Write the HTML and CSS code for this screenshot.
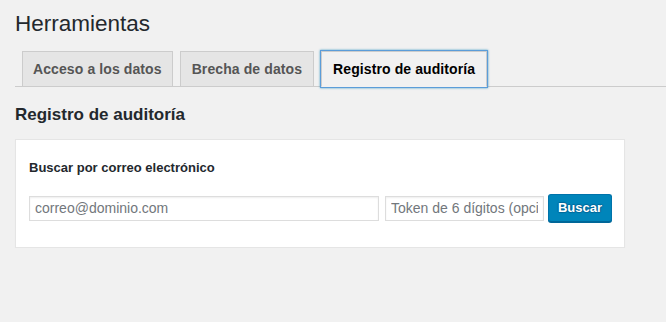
FILE: index.html
```html
<!DOCTYPE html>
<html>
<head>
  <meta charset="utf-8">
  <title>Herramientas</title>
  <link rel="stylesheet" href="styles.css">
</head>
<body>
  <div class="wrap">
    <h1>Herramientas</h1>

    <!-- Tabs -->
    <nav class="nav-tab-wrapper">
      <a class="nav-tab" href="#">Acceso a los datos</a>
      <a class="nav-tab" href="#">Brecha de datos</a>
      <a class="nav-tab nav-tab-active" href="#">Registro de auditoría</a>
    </nav>

    <h2>Registro de auditoría</h2>

    <!-- Search card -->
    <div class="card">
      <label class="card-label" for="email">Buscar por correo electrónico</label>
      <div class="search-row">
        <input id="email" class="email-input" type="text" placeholder="correo@dominio.com">
        <input class="token-input" type="text" placeholder="Token de 6 dígitos (opcional)">
        <button class="button-primary">Buscar</button>
      </div>
    </div>
  </div>
</body>
</html>
```

FILE: styles.css
```css
* {
  box-sizing: border-box;
}

body {
  margin: 0;
  background: #f1f1f1;
  color: #444;
  font-family: "Liberation Sans", Arial, sans-serif;
  font-size: 13px;
}

.wrap {
  margin: 0 0 0 15px;
}

h1 {
  margin: 0;
  padding: 9px 0 4px;
  font-size: 22.5px;
  font-weight: 400;
  line-height: 1.3;
  color: #23282d;
}

/* Tabs */
.nav-tab-wrapper {
  display: flex;
  padding-top: 9px;
  border-bottom: 1px solid #ccc;
}

.nav-tab {
  margin-left: 7px;
  margin-bottom: -1px;
  padding: 5px 11px 5px 11px;
  border: 1px solid #ccc;
  border-bottom: 1px solid #ccc;
  background: #e5e5e5;
  color: #555;
  font-size: 14px;
  font-weight: 700;
  line-height: 24px;
  letter-spacing: 0.1px;
  text-decoration: none;
}

.nav-tab:first-child {
  padding: 5px 10px;
}

.nav-tab-active {
  border-bottom-color: #f1f1f1;
  background: #f1f1f1;
  color: #000;
  box-shadow: 0 0 0 1px #5b9dd9, 0 0 2px 1px rgba(30, 140, 190, 0.8);
}

h2 {
  margin: 17px 0 0;
  font-size: 17px;
  font-weight: 700;
  line-height: 22px;
  color: #23282d;
}

/* Card */
.card {
  width: 610px;
  margin-top: 13px;
  padding: 19px 13px 25px;
  background: #fff;
  border: 1px solid #e5e5e5;
  box-shadow: 0 1px 1px rgba(0, 0, 0, 0.04);
}

.card-label {
  display: block;
  font-size: 13px;
  font-weight: 700;
  line-height: 18px;
  color: #23282d;
}

.search-row {
  display: flex;
  align-items: center;
  margin-top: 17px;
}

.search-row input {
  flex-shrink: 0;
  height: 25px;
  padding: 0 5px;
  border: 1px solid #ddd;
  box-shadow: inset 0 1px 2px rgba(0, 0, 0, 0.07);
  background: #fff;
  font-family: "Liberation Sans", Arial, sans-serif;
  font-size: 14px;
  color: #32373c;
}

.search-row input::placeholder {
  color: #72777c;
}

.email-input {
  width: 350px;
}

.token-input {
  width: 159px;
  margin-left: 6px;
}

.button-primary {
  flex-shrink: 0;
  width: 64px;
  height: 28px;
  margin-left: 4px;
  padding: 0 0 1px;
  border: 1px solid #0073aa;
  border-bottom-color: #006799;
  border-radius: 3px;
  background: #0085ba;
  box-shadow: 0 1px 0 #006799;
  color: #fff;
  font-family: "Liberation Sans", Arial, sans-serif;
  font-size: 13px;
  font-weight: 700;
  text-shadow: 0 -1px 1px #006799, 1px 0 1px #006799, 0 1px 1px #006799, -1px 0 1px #006799;
}
```
